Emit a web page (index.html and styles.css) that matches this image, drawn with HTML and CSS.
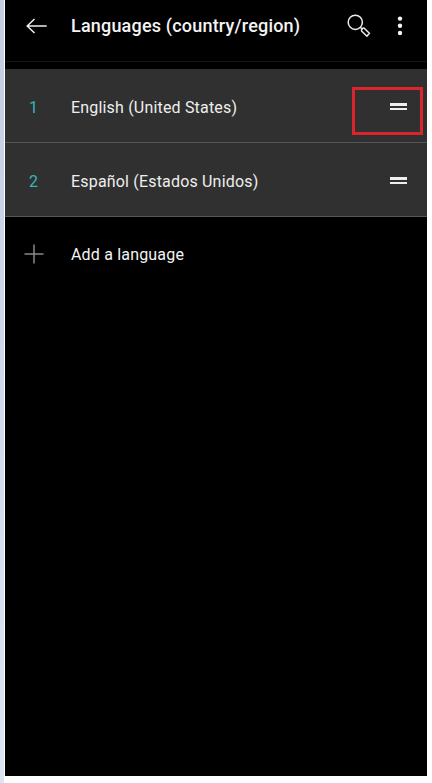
FILE: index.html
```
<!DOCTYPE html>
<html lang="en">
	<head>
		<meta charset="utf-8">
		<title>Languages</title>
		<link rel="stylesheet" href="styles.css">
	</head>
	<body>
		<div class="page">
			<div class="screen">
				<header class="bar">
					<svg class="back" width="22" height="16" viewBox="0 0 22 16"><path d="M8.5 1 L1.2 8 L8.5 15 M1.2 8 H20.7"/></svg>
					<h1>Languages (country/region)</h1>
					<svg class="search" width="24" height="24" viewBox="0 0 24 24"><circle cx="8.3" cy="8.3" r="7.1"/><path d="M13.3 13.3 L14.8 14.8 M14.6 15.8 L16 14.1 Q16.6 13.7 17.2 14.2 L22.4 19.2 L19.9 22.2 L14.8 17.2 Q14.2 16.4 14.6 15.8 Z"/></svg>
					<svg class="more" width="6" height="20" viewBox="0 0 6 20"><circle cx="3" cy="2.6" r="2.2"/><circle cx="3" cy="9.8" r="2.2"/><circle cx="3" cy="17" r="2.2"/></svg>
				</header>
				<ul class="languages">
					<li>
						<span class="number">1</span>
						<span class="name">English (United States)</span>
						<span class="handle"></span>
						<span class="highlight"></span>
					</li>
					<li>
						<span class="number">2</span>
						<span class="name">Español (Estados Unidos)</span>
						<span class="handle"></span>
					</li>
				</ul>
				<div class="add">
					<svg width="20" height="20" viewBox="0 0 20 20"><path d="M10 0.5 V19.5 M0.5 10 H19.5"/></svg>
					<span class="name">Add a language</span>
				</div>
			</div>
		</div>
	</body>
</html>
```

FILE: styles.css
```
* {
	box-sizing: border-box;
}

body {
	margin: 0;
	background: #fff;
	font-family: Roboto, "Liberation Sans", sans-serif;
	color: #f4f4f4;
}

.page {
	height: 783px;
	padding-left: 5px;
	background: linear-gradient(#c4cce2, #dbe5f3) no-repeat 0 0 / 4px 100%;
}

.screen {
	width: 422px;
	height: 776px;
	background: #000;
}

svg {
	display: block;
	flex: none;
	fill: none;
	stroke: #eee;
	stroke-width: 1.5;
}

.bar {
	display: flex;
	align-items: center;
	height: 62px;
	padding: 0 24px 9px 21px;
	border-bottom: 1px solid #151515;
}

.bar h1 {
	flex: 1;
	margin: 0 0 0 23px;
	font-size: 18px;
	font-weight: 500;
	line-height: 24px;
	letter-spacing: 0.19px;
	white-space: nowrap;
}

.search {
	margin-right: 26px;
}

.more {
	fill: #f4f4f4;
	stroke: none;
}

.languages {
	margin: 7px 0 0;
	padding: 0;
	list-style: none;
}

.languages li {
	position: relative;
	display: flex;
	align-items: center;
	height: 74px;
	padding: 1px 20px 0 0;
	background: #303030;
	border-bottom: 1px solid #555;
}

.number {
	width: 66px;
	padding: 2px 0 0 24px;
	font-size: 16px;
	color: #35b5bd;
}

.name {
	flex: 1;
	padding-top: 2px;
	font-size: 16px;
	line-height: 20px;
	letter-spacing: 0.18px;
}

.languages .name {
	padding-top: 3px;
	color: #eee;
}

.handle {
	width: 17px;
	height: 7px;
	border: solid #eee;
	border-width: 3px 0 2px;
}

.highlight {
	position: absolute;
	top: 18px;
	right: 4px;
	width: 71px;
	height: 48px;
	border: 3px solid #d9252c;
}

.add {
	display: flex;
	align-items: center;
	height: 74px;
	padding-left: 19px;
}

.add svg {
	margin-right: 27px;
	stroke: #888;
}
```
